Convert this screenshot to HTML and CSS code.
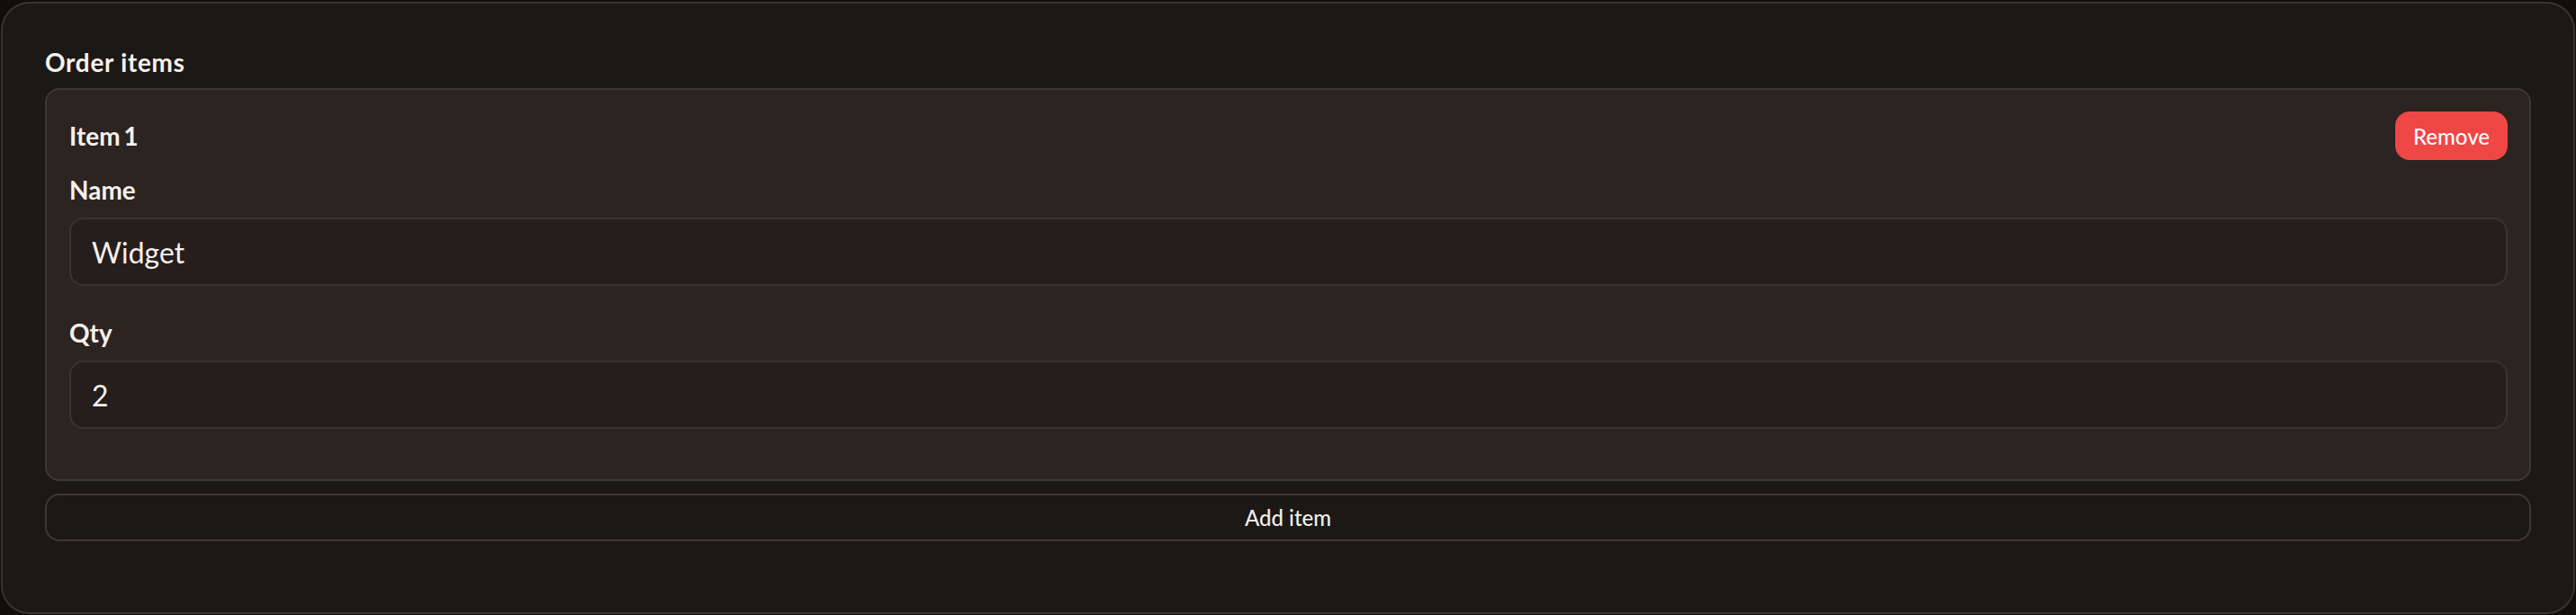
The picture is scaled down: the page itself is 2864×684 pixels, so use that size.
FILE: index.html
```html
<!DOCTYPE html>
<html lang="en">
<head>
<meta charset="utf-8">
<title>Order items</title>
<link rel="stylesheet" href="styles.css">
</head>
<body>
<div class="card">
  <h2 class="section-title">Order items</h2>
  <div class="item">
    <div class="item-head">
      <span class="item-title">Item 1</span>
      <button class="btn-remove" type="button">Remove</button>
    </div>
    <div class="field">
      <label class="label">Name</label>
      <div class="input">Widget</div>
    </div>
    <div class="field">
      <label class="label">Qty</label>
      <div class="input">2</div>
    </div>
  </div>
  <button class="btn-add" type="button">Add item</button>
</div>
</body>
</html>
```

FILE: styles.css
```css
html, body {
  margin: 0;
  padding: 0;
  background: #100d0c;
}
body {
  padding: 2px 1px 1px 1px;
  font-family: Lato, "Noto Sans", sans-serif;
  color: #f6f1ed;
}
.card {
  box-sizing: border-box;
  height: 681px;
  background: #1c1815;
  border: 2px solid #3a3330;
  border-radius: 32px;
  padding: 45px 47px 0 47px;
  display: flex;
  flex-direction: column;
}
.section-title {
  margin: 0 0 9px 0;
  font-size: 28px;
  line-height: 40px;
  font-weight: 700;
  letter-spacing: 0.7px;
}
.item {
  background: #2c2421;
  border: 2px solid #3f3734;
  border-radius: 16px;
  padding: 24px 24px 56px 25px;
  display: flex;
  flex-direction: column;
}
.item-head {
  display: flex;
  justify-content: space-between;
  align-items: center;
  height: 54px;
}
.item-title {
  font-size: 28px;
  line-height: 40px;
  font-weight: 700;
  word-spacing: -3px;
}
.btn-remove {
  height: 54px;
  padding: 0 20px;
  border: none;
  border-radius: 16px;
  background: #ef4646;
  color: #ffffff;
  font-family: inherit;
  font-size: 24px;
  font-weight: 500;
}
.field {
  display: flex;
  flex-direction: column;
  margin-top: 13px;
}
.field + .field {
  margin-top: 32px;
}
.label {
  font-size: 28px;
  line-height: 40px;
  font-weight: 700;
  margin-bottom: 11px;
}
.input {
  box-sizing: border-box;
  height: 76px;
  background: #261e1c;
  border: 2px solid #3b3330;
  border-radius: 16px;
  padding: 0 23px;
  display: flex;
  align-items: center;
  font-size: 32px;
  font-weight: 400;
}
.btn-add {
  margin-top: 14px;
  height: 53px;
  background: #1c1815;
  border: 2px solid #3f3734;
  border-radius: 16px;
  color: #f3eee9;
  font-family: inherit;
  font-size: 24px;
  font-weight: 500;
}
```
